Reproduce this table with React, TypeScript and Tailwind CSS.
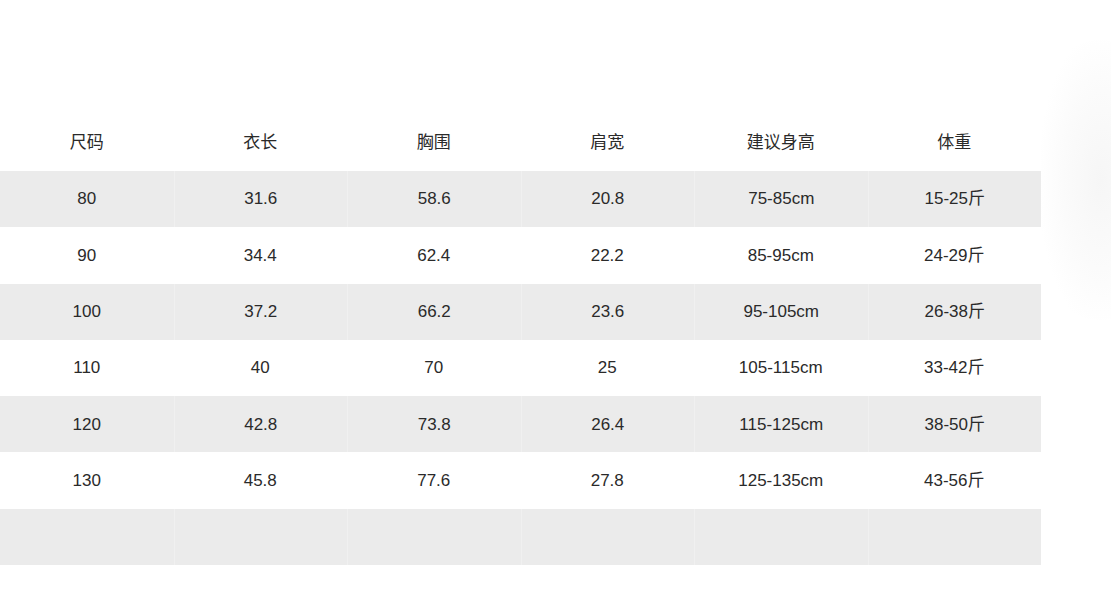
import React from 'react';

const headers = ['尺码', '衣长', '胸围', '肩宽', '建议身高', '体重'];

const rows: string[][] = [
  ['80', '31.6', '58.6', '20.8', '75-85cm', '15-25斤'],
  ['90', '34.4', '62.4', '22.2', '85-95cm', '24-29斤'],
  ['100', '37.2', '66.2', '23.6', '95-105cm', '26-38斤'],
  ['110', '40', '70', '25', '105-115cm', '33-42斤'],
  ['120', '42.8', '73.8', '26.4', '115-125cm', '38-50斤'],
  ['130', '45.8', '77.6', '27.8', '125-135cm', '43-56斤'],
  ['', '', '', '', '', ''],
];

const App: React.FC = () => {
  return (
    <div
      className="relative w-[1111px] h-[600px] overflow-hidden bg-white text-[#2a2a2a] text-[17px]"
      style={{ fontFamily: '"Liberation Sans", "Noto Sans CJK SC", sans-serif' }}
    >
      {/* faint shading on the right edge */}
      <div className="absolute right-[-50px] top-[40px] w-[120px] h-[280px] rounded-full bg-[radial-gradient(ellipse_at_center,#f6f6f6_0%,#fbfbfb_45%,#ffffff_75%)]" />

      <div className="relative pt-[115px] w-[1041px]">
        <div className="grid grid-cols-6 h-[56px] items-center text-center">
          {headers.map((h) => (
            <div key={h}>{h}</div>
          ))}
        </div>
        {rows.map((r, i) => (
          <div
            key={i}
            className={`grid grid-cols-6 h-[56.3px] items-stretch text-center ${i % 2 === 0 ? 'bg-[#ebebeb]' : 'bg-white'}`}
          >
            {r.map((c, j) => (
              <div
                key={j}
                className={`flex items-center justify-center ${j > 0 && i % 2 === 0 ? 'border-l border-[#f0f0f0]' : ''}`}
              >
                {c}
              </div>
            ))}
          </div>
        ))}
      </div>
    </div>
  );
};

export default App;
